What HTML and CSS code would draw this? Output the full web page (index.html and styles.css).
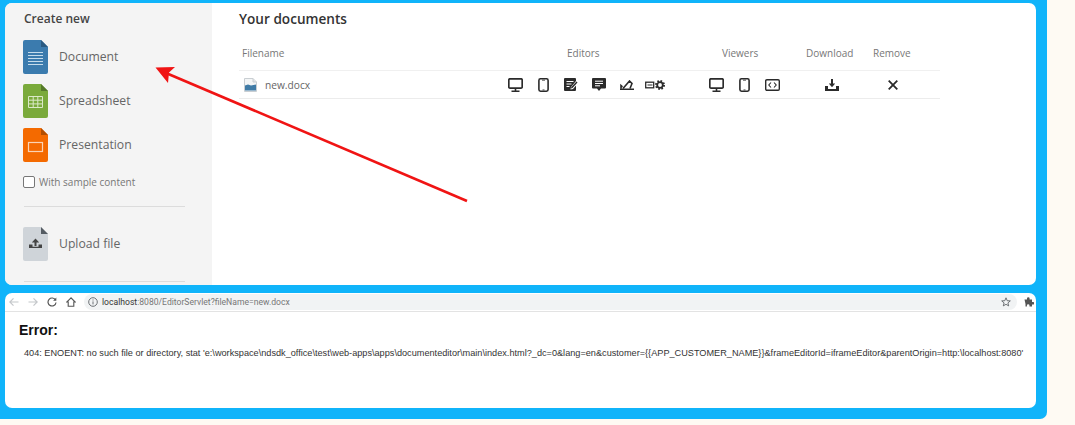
FILE: index.html
```html
<!DOCTYPE html>
<html lang="en">
<head>
<meta charset="utf-8">
<title>Documents</title>
<link rel="stylesheet" href="styles.css">
</head>
<body>
<svg class="defs" width="0" height="0" aria-hidden="true">
  <symbol id="desktop" viewBox="0 0 15 14"><rect x="0.800" y="0.800" width="13.400" height="9.400" rx="1.200" fill="none" stroke="#2b2b2b" stroke-width="1.700"/><path d="M7.500 11v1.600M3.500 13.200h8" stroke="#2b2b2b" stroke-width="1.600" fill="none"/></symbol>
  <symbol id="phone" viewBox="0 0 11 14"><rect x="0.900" y="0.800" width="9.200" height="12.400" rx="1.600" fill="none" stroke="#2b2b2b" stroke-width="1.600"/><path d="M4 2.200h3M4.500 11.900h2" stroke="#2b2b2b" stroke-width="0.800"/></symbol>
</svg>
<div class="frame">
  <section class="top">
    <aside class="sidebar">
      <h2 class="side-title">Create new</h2>
      <div class="create-list">
        <div class="create-item">
          <svg class="doc-icon" viewBox="0 0 25 34"><path d="M2 0h16l7 7v25a2 2 0 0 1-2 2H2a2 2 0 0 1-2-2V2a2 2 0 0 1 2-2z" fill="#3b7bae"/><path d="M18 0l7 7h-7z" fill="#2a5a82"/><path d="M5 12.500h15M5 15.500h15M5 18.500h15M5 21.500h15M5 24.500h15" stroke="#c5dcec" stroke-width="1"/></svg>
          <span class="create-label">Document</span>
        </div>
        <div class="create-item">
          <svg class="doc-icon" viewBox="0 0 25 34"><path d="M2 0h16l7 7v25a2 2 0 0 1-2 2H2a2 2 0 0 1-2-2V2a2 2 0 0 1 2-2z" fill="#7aaa3b"/><path d="M18 0l7 7h-7z" fill="#55792a"/><path d="M5.500 12.500h14v11h-14zM5.500 16.200h14M5.500 19.900h14M10.200 12.500v11M14.800 12.500v11" fill="none" stroke="#dbe9c8" stroke-width="1"/></svg>
          <span class="create-label">Spreadsheet</span>
        </div>
        <div class="create-item">
          <svg class="doc-icon" viewBox="0 0 25 34"><path d="M2 0h16l7 7v25a2 2 0 0 1-2 2H2a2 2 0 0 1-2-2V2a2 2 0 0 1 2-2z" fill="#f46a00"/><path d="M18 0l7 7h-7z" fill="#b34e00"/><rect x="5.500" y="14.500" width="14" height="9" fill="none" stroke="#fbd3b3" stroke-width="1.200"/></svg>
          <span class="create-label">Presentation</span>
        </div>
      </div>
      <label class="sample"><input class="sample-box" type="checkbox"><span>With sample content</span></label>
      <div class="side-rule"></div>
      <div class="create-item upload">
        <svg class="doc-icon" viewBox="0 0 25 34"><path d="M2 0h16l7 7v25a2 2 0 0 1-2 2H2a2 2 0 0 1-2-2V2a2 2 0 0 1 2-2z" fill="#cfd4d9"/><path d="M18 0l7 7h-7z" fill="#555c63"/><path d="M12.500 13v6" fill="none" stroke="#444" stroke-width="2"/><path d="M8.800 15.500l3.700-4 3.700 4z" fill="#444"/><path d="M6 17.500h3.500v2.200h6v-2.200H19V21H6z" fill="#444"/></svg>
        <span class="create-label">Upload file</span>
      </div>
      <div class="side-rule last"></div>
    </aside>
    <main class="docs">
      <h1 class="docs-title">Your documents</h1>
      <div class="doc-table">
        <div class="head-row">
          <span>Filename</span><span>Editors</span><span>Viewers</span><span>Download</span><span>Remove</span>
        </div>
        <div class="body-row">
          <div class="file-cell">
            <svg class="file-icon" viewBox="0 0 13 14"><path d="M0.500 0.500h8.500l3.500 3.500v9.500H0.500z" fill="#f3f5f6" stroke="#c9ced2"/><path d="M9 0.500v3.500h3.500" fill="#dfe3e6" stroke="#c9ced2"/><path d="M1 7.500l3-1 3 1 5-1v6H1z" fill="#3f7ba6"/></svg>
            <span class="file-name">new.docx</span>
          </div>
          <div class="icons">
            <span class="slot"><svg class="ic-desktop"><use href="#desktop"/></svg></span>
            <span class="slot"><svg class="ic-phone"><use href="#phone"/></svg></span>
            <span class="slot"><svg class="ic-edit" viewBox="0 0 14 13"><path d="M1 0h10a1 1 0 0 1 1 1v2L7 9l-.500 2.500L9 11l3-3.500V12a1 1 0 0 1-1 1H1a1 1 0 0 1-1-1V1a1 1 0 0 1 1-1z" fill="#2b2b2b"/><path d="M2.500 3.500h7M2.500 6h5M2.500 8.500h3" stroke="#fff" stroke-width="1"/><path d="M12.500 3.500l1 1-5 5.500-1.500.500.300-1.600z" fill="#2b2b2b"/></svg></span>
            <span class="slot"><svg class="ic-comment" viewBox="0 0 14 13"><path d="M1 0h12a1 1 0 0 1 1 1v8.500a1 1 0 0 1-1 1H9L7 13l-2-2.500H1a1 1 0 0 1-1-1V1a1 1 0 0 1 1-1z" fill="#2b2b2b"/><path d="M3 3.200h8M3 5.500h8M3 7.800h5" stroke="#fff" stroke-width="1"/></svg></span>
            <span class="slot"><svg class="ic-sign" viewBox="0 0 14 10"><path d="M0 9.200h14" stroke="#2b2b2b" stroke-width="1.600"/><path d="M1 8.800V5.500l1.500 1.300M3 8.500L9.500 1l2.500 2.500L10 8.500" fill="none" stroke="#2b2b2b" stroke-width="1.600"/></svg></span>
            <span class="slot"><svg class="ic-form" viewBox="0 0 20 10"><rect x="0.700" y="2.200" width="8" height="5.600" fill="none" stroke="#2b2b2b" stroke-width="1.300"/><path d="M2.500 5h5" stroke="#2b2b2b" stroke-width="1.200"/><circle cx="15" cy="5" r="4" fill="none" stroke="#2b2b2b" stroke-width="2" stroke-dasharray="1.600 1.540"/><circle cx="15" cy="5" r="2.800" fill="none" stroke="#2b2b2b" stroke-width="1.800"/></svg></span>
          </div>
          <div class="icons">
            <span class="slot"><svg class="ic-desktop"><use href="#desktop"/></svg></span>
            <span class="slot"><svg class="ic-phone"><use href="#phone"/></svg></span>
            <span class="slot"><svg class="ic-embed" viewBox="0 0 15 12"><rect x="0.700" y="0.700" width="13.600" height="10.600" rx="1.200" fill="none" stroke="#2b2b2b" stroke-width="1.400"/><path d="M6 3.500L3.800 6 6 8.500M9 3.500L11.200 6 9 8.500" fill="none" stroke="#2b2b2b" stroke-width="1.100"/></svg></span>
          </div>
          <span class="slot"><svg class="ic-download" viewBox="0 0 14 12"><path d="M7 0v5.500" stroke="#2b2b2b" stroke-width="2"/><path d="M3.800 4.500h6.400L7 8.200z" fill="#2b2b2b"/><path d="M0 7h3v3h8V7h3v5H0z" fill="#2b2b2b"/></svg></span>
          <span class="slot"><svg class="ic-close" viewBox="0 0 10 10"><path d="M0.700 0.700l8.600 8.600M9.300 0.700L0.700 9.300" stroke="#2b2b2b" stroke-width="1.800"/></svg></span>
        </div>
      </div>
    </main>
  </section>
  <section class="bottom">
    <div class="toolbar">
      <svg class="tb-nav" viewBox="0 0 10 10"><path d="M9.500 5H1M4.500 1.300L.800 5l3.700 3.700" fill="none" stroke="#c4c7ca" stroke-width="1.200"/></svg>
      <svg class="tb-nav" viewBox="0 0 10 10"><path d="M.500 5H9M5.500 1.300L9.200 5 5.500 8.700" fill="none" stroke="#c4c7ca" stroke-width="1.200"/></svg>
      <svg class="tb-nav" viewBox="0 0 10 10"><path d="M8.500 3A4 4 0 1 0 9 5.500" fill="none" stroke="#555" stroke-width="1.200"/><path d="M9.300 .600v3.200H6.100z" fill="#555"/></svg>
      <svg class="tb-nav" viewBox="0 0 10 10"><path d="M5 .800L.800 5H2.200V9.300H7.800V5H9.200z" fill="none" stroke="#555" stroke-width="1.100"/></svg>
      <div class="url-pill">
        <svg class="tb-info" viewBox="0 0 10 10"><circle cx="5" cy="5" r="4.300" fill="none" stroke="#5f6368" stroke-width="0.900"/><path d="M5 4.400v3M5 2.500v1" stroke="#5f6368" stroke-width="0.900"/></svg>
        <span class="url"><span class="url-host">localhost</span>:8080/EditorServlet?fileName=new.docx</span>
        <span class="url-fill"></span>
        <svg class="tb-star" viewBox="0 0 10 10"><path d="M5 .800l1.200 2.900 3.100.200-2.400 2 .800 3L5 7.300 2.300 8.900l.800-3-2.400-2 3.100-.200z" fill="none" stroke="#5f6368" stroke-width="0.900"/></svg>
      </div>
      <svg class="tb-ext" viewBox="0 0 10 10"><path d="M0.500 2.500H3V1.500a1.300 1.300 0 0 1 2.600 0V2.500H8V5H9a1.300 1.300 0 0 1 0 2.600H8V9.500H5.500V8.500a1.300 1.300 0 0 0-2.600 0V9.500H1.500V7z" fill="#555"/></svg>
    </div>
    <div class="error-page">
      <h3 class="error-title">Error:</h3>
      <p class="error-text">404: ENOENT: no such file or directory, stat 'e:\workspace\ndsdk_office\test\web-apps\apps\documenteditor\main\index.html?_dc=0&amp;lang=en&amp;customer={{APP_CUSTOMER_NAME}}&amp;frameEditorId=iframeEditor&amp;parentOrigin=http:\localhost:8080'</p>
    </div>
  </section>
  <svg class="arrow" viewBox="0 0 1047 419" aria-hidden="true">
    <path d="M467 201L166 73" stroke="#f01414" stroke-width="2.600" fill="none"/>
    <path d="M155.500 67.500L175 67l-6 5.500L168 83z" fill="#f01414"/>
  </svg>
</div>
</body>
</html>
```
FILE: styles.css
```css
* { box-sizing: border-box; }
html, body { margin: 0; padding: 0; }
body { background: #fefaf3; height: 425px; overflow: hidden; font-family: "Open Sans", sans-serif; color: #444; }
.defs { position: absolute; }
.frame { position: relative; width: 1047px; height: 419px; background: #10b4fa; padding: 3px 11px 11px 5px; display: flex; flex-direction: column; gap: 8px; border-bottom-right-radius: 7px; }
.top { height: 282px; display: flex; background: #fff; border-radius: 7px; overflow: hidden; flex: none; }
.sidebar { width: 207px; flex: none; background: #f4f4f4; padding: 8px 0 0 18px; }
.side-title { margin: 0 0 13px 1px; font-size: 12px; line-height: 16px; font-weight: 600; color: #444; }
.create-list { display: flex; flex-direction: column; gap: 10px; }
.create-item { display: flex; align-items: center; gap: 11px; height: 34px; }
.doc-icon { width: 25px; height: 34px; flex: none; }
.create-label { font-size: 12.200px; color: #666; padding-bottom: 2px; }
.sample { display: flex; align-items: center; gap: 4px; margin-top: 14px; height: 12px; font-size: 10px; color: #777; }
.sample-box { appearance: none; width: 12px; height: 12px; margin: 0; border: 1px solid #777; border-radius: 2px; background: #fff; flex: none; }
.side-rule { width: 161px; height: 1px; margin: 18px 0 0 1px; background: #dcdcdc; }
.side-rule.last { margin-top: 20px; }
.upload { margin-top: 20px; }
.docs { padding: 8px 0 0 27px; width: 728px; }
.docs-title { margin: 0; font-size: 13.600px; line-height: 16px; font-weight: 600; color: #333; }
.doc-table { width: 701px; margin-top: 9px; }
.head-row { display: grid; grid-template-columns: 325px 155px 84px 67px auto; height: 35px; align-items: center; padding: 0 0 0 3px; font-size: 10px; color: #777; border-bottom: 1px solid #f0f0f0; }
.body-row { display: grid; grid-template-columns: 257px 201px 116px 61px 28px; height: 28px; align-items: center; padding-left: 5px; border-bottom: 1px solid #ececec; }
.file-cell { display: flex; align-items: center; gap: 8px; }
.file-icon { width: 13px; height: 14px; }
.file-name { font-size: 10.200px; color: #666; }
.icons { display: flex; }
.slot { width: 28px; height: 16px; display: flex; align-items: center; justify-content: center; }
.ic-desktop { width: 15px; height: 14px; }
.ic-phone { width: 11px; height: 14px; }
.ic-edit { width: 14px; height: 13px; }
.ic-comment { width: 14px; height: 13px; }
.ic-sign { width: 14px; height: 10px; }
.ic-form { width: 20px; height: 10px; flex: none; }
.ic-embed { width: 15px; height: 12px; }
.ic-download { width: 14px; height: 12px; }
.ic-close { width: 10px; height: 10px; }
.bottom { flex: 1; background: #fff; border-radius: 7px; overflow: hidden; display: flex; flex-direction: column; }
.toolbar { height: 19px; flex: none; display: flex; align-items: center; padding-left: 4px; border-bottom: 1px solid #e3e3e3; }
.tb-nav { width: 10px; height: 10px; margin-right: 9px; flex: none; }
.url-pill { display: flex; align-items: center; height: 16px; width: 933px; margin-left: -1px; padding: 0 2px 0 4px; background: #f1f3f4; border-radius: 8px; }
.tb-info { width: 10px; height: 10px; flex: none; }
.url { margin-left: 4px; font-family: "Roboto", sans-serif; font-size: 8.600px; color: #777; white-space: nowrap; }
.url-host { color: #333; }
.url-fill { flex: 1; }
.tb-star { width: 10px; height: 10px; margin-right: 4px; flex: none; }
.tb-ext { width: 10px; height: 10px; margin-left: 7px; flex: none; }
.error-page { padding: 10px 0 0 14px; font-family: "Liberation Sans", sans-serif; color: #222; }
.error-title { margin: 0; font-size: 14px; line-height: 16px; font-weight: 700; color: #111; }
.error-text { margin: 9px 0 0 5px; font-size: 9.160px; line-height: 12px; white-space: nowrap; color: #333; }
.arrow { position: absolute; left: 0; top: 0; width: 1047px; height: 419px; pointer-events: none; }
```
